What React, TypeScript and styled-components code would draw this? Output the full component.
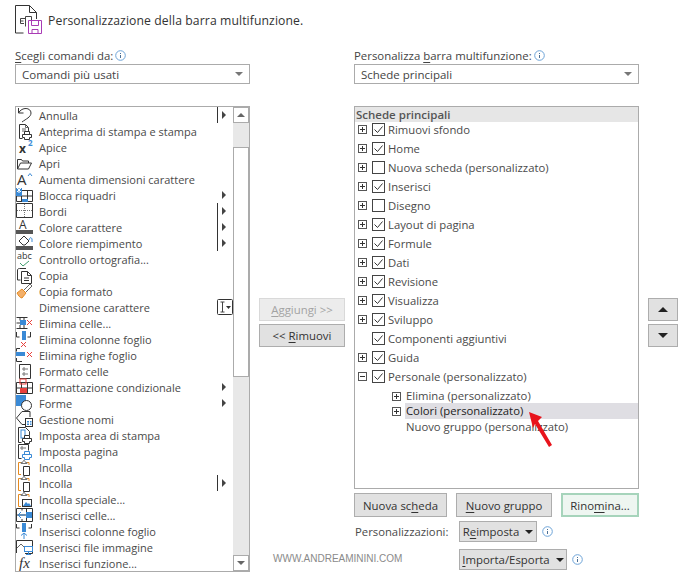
import React, { FC, ReactNode } from 'react';
import styled, { createGlobalStyle } from 'styled-components';

const GlobalStyle = createGlobalStyle`
  html, body {
    margin: 0;
    padding: 0;
    background: #fff;
  }
  body {
    font-family: 'Open Sans', 'Noto Sans', sans-serif;
    font-size: 12px;
    color: #444;
  }
`;

const BLUE = '#3a8ad6';
const RED = '#e8403c';
const ORANGE = '#e68a1f';
const INK = '#333';

const Lines: FC<{ d: string; color?: string; fill?: string }> = ({ d, color = INK, fill = 'none' }) => (
  <path d={d} stroke={color} fill={fill} strokeWidth={1} />
);

const Label: FC<{
  x: number;
  y: number;
  size: number;
  weight?: number;
  color?: string;
  fx?: boolean;
  children: ReactNode;
}> = ({ x, y, size, weight = 400, color = INK, fx, children }) => (
  <text
    x={x}
    y={y}
    fontSize={size}
    fontWeight={weight}
    fill={color}
    fontStyle={fx ? 'italic' : 'normal'}
    fontFamily={fx ? 'Liberation Serif, serif' : 'Open Sans, sans-serif'}
  >
    {children}
  </text>
);

const grid = 'M.5 3.5h16v11H.5zM.5 9h16M5.5 3.5v11M11.5 3.5v11';
const pasteBase = (
  <>
    <Lines d="M5 3.5H2.5v12H5" color={ORANGE} />
    <Lines d="M11 3.5h2V6" color={ORANGE} />
    <Lines d="M5 3.5h1.5l1-2h1l1 2H11v1H5z" color="#777" />
  </>
);
const printer = (color: string) => <Lines d="M8.5 11.5v-3h5v3M6.5 11.5h9v3h-2v2h-5v-2h-2z" color={color} fill="#fff" />;

const icons: Record<string, ReactNode> = {
  undo: <Lines d="M2.5 1v5h5M2.5 6C6-.5 15 .5 15 6c0 4-5 6-9 9" />,
  preview: (
    <>
      <Lines d="M3.5 1.5h6l3 3v6M3.5 1.5v14h3" />
      <Lines d="M9.5 1.5v3h3M6 6h4M6 8h4" color="#666" />
      {printer(INK)}
    </>
  ),
  sup: (
    <>
      <Label x={3} y={14} size={12} weight={700}>x</Label>
      <Label x={12} y={7} size={8} weight={700} color={BLUE}>2</Label>
    </>
  ),
  open: <Lines d="M1.5 14V4.5h4l1 1.5h6v2M1.5 14l3-6h11l-3 6z" />,
  grow: (
    <>
      <Label x={1} y={14} size={15}>A</Label>
      <Lines d="M12 5l2-2.5L16 5" color={BLUE} />
    </>
  ),
  freeze: (
    <>
      <Lines d={grid} />
      <rect x={0} y={1} width={6} height={8} fill={BLUE} />
      <rect x={6} y={12} width={6} height={3} fill={BLUE} />
      <Lines d="M1 5L5 1M1 1l4 4M3 0v6" color="#fff" />
    </>
  ),
  borders: (
    <>
      <Lines d="M.5 .5h16v14H.5z" />
      <path d="M8.5 1v13M1 7.5h15" stroke="#777" strokeDasharray="1 1" />
    </>
  ),
  fontcolor: (
    <>
      <Label x={3} y={10} size={12}>A</Label>
      <rect x={0} y={11} width={17} height={4} fill="#555" />
    </>
  ),
  fill: (
    <>
      <Lines d="M3 6l5-5 5 5-4 4H7z" />
      <Lines d="M13 5c1-3 2-3 3-1v3" color={BLUE} />
      <rect x={0} y={11} width={17} height={4} fill="#555" />
    </>
  ),
  spell: (
    <>
      <Label x={1} y={8} size={9}>abc</Label>
      <Lines d="M4 12l3 3 6-5" color="#3f9e6e" />
    </>
  ),
  copy: (
    <>
      <Lines d="M6 1.5h4M1.5 3v10h3M1.5 3c0-1 1-1.5 2-1.5h3" />
      <Lines d="M5.5 4.5h6l4 4v8h-10zM11.5 4.5v4h4M8 11h5M8 13.5h5" />
    </>
  ),
  brush: (
    <>
      <path d="M1 10l5-4 4 4-4 5c-2 0-4-3-5-5z" fill="#f3b06a" stroke={ORANGE} />
      <Lines d="M8 7l6-6 2 2-6 6" color="#666" />
    </>
  ),
  delcell: (
    <>
      <Lines d="M.5 2.5h11M.5 13.5h11M4 2.5v3M8 2.5v3M4 10v3.5M8 10v3.5M.5 8h4" />
      <rect x={4} y={5} width={6} height={5} fill={BLUE} />
      <Lines d="M11 5l5 5M16 5l-5 5" color={RED} />
    </>
  ),
  delcol: (
    <>
      <Lines d="M.5 1v5h3M14.5 1v5h-3" />
      <rect x={6} y={0} width={4} height={9} fill={BLUE} />
      <Lines d="M5 11l5 5M10 11l-5 5" color={RED} />
    </>
  ),
  delrow: (
    <>
      <Lines d="M4 1.5H.5v3M.5 11v3.5H6" />
      <rect x={0} y={5} width={9} height={4} fill={BLUE} />
      <Lines d="M11 5l5 5M16 5l-5 5" color={RED} />
    </>
  ),
  format: (
    <>
      <Lines d="M3.5 1.5h11v14h-11z" />
      <path d="M7 5h2v2H7zM7 10h2v2H7zM10 6h2M10 11h2" stroke="#777" fill="none" />
    </>
  ),
  cond: (
    <>
      <Lines d={grid} />
      <rect x={4} y={0} width={6} height={5} fill="none" stroke={RED} />
      <rect x={4} y={9} width={7} height={5} fill={RED} />
    </>
  ),
  shapes: (
    <>
      <path d="M0 0h10v7H6v4H0z" fill={BLUE} />
      <circle cx={10.5} cy={10.5} r={5} fill="#fff" stroke={INK} />
    </>
  ),
  names: (
    <>
      <Lines d="M14 6V.5H6L.5 7 6 13.5h3" />
      <rect x={9.5} y={7.5} width={7} height={8} fill="#fff" stroke={INK} />
      <path d="M11 10h2v1.5h-2zM14 10h1.5v1.5H14zM11 12.5h2V14h-2zM14 12.5h1.5V14H14z" fill={BLUE} />
    </>
  ),
  area: (
    <>
      <Lines d="M2.5.5h7l4 4v4M2.5.5v15h3" />
      <rect x={5} y={3} width={4} height={8} fill="none" stroke={BLUE} />
      {printer(INK)}
    </>
  ),
  setup: (
    <>
      <Lines d="M2.5 1.5v14h3M2.5 1.5h10v6" />
      <path d="M5 4h2v2H5zM8 5h2" stroke="#777" fill="none" />
      {printer(BLUE)}
    </>
  ),
  paste: (
    <>
      {pasteBase}
      <Lines d="M7.5 7.5h6v9h-6z" fill="#fff" />
    </>
  ),
  pastesp: (
    <>
      {pasteBase}
      <rect x={6.5} y={8.5} width={9} height={7} fill="#fff" stroke={INK} />
      <path d="M7 15l3-4 2 2 1-1 2 3z" fill={BLUE} />
    </>
  ),
  inscell: (
    <>
      <Lines d="M.5 1.5h16v13H.5zM.5 8h16M10.5 1.5v13M6 1.5v2M6 12v2.5" />
      <rect x={10} y={5} width={6} height={6} fill={BLUE} />
      <Lines d="M9 8H2M5 5L2 8l3 3" color={BLUE} />
    </>
  ),
  inscol: (
    <>
      <Lines d="M.5 1v4h3M15.5 1v4h-3" />
      <rect x={6} y={0} width={4} height={9} fill={BLUE} />
      <Lines d="M8 16v-6M5 12.5L8 10l3 2.5" color={BLUE} />
    </>
  ),
  insimg: (
    <>
      <Lines d="M.5 1.5h16v13H9M.5 1.5V14" />
      <Lines d="M1 9l4-4 3 3" color="#666" />
      <rect x={8.5} y={7.5} width={8} height={5} fill="#fff" stroke={BLUE} />
      <Lines d="M12.5 12.5v3M10 15.5h5" color={BLUE} />
    </>
  ),
  fx: <Label x={3} y={13} size={15} fx>fx</Label>,
};

const commands: { label: string; icon?: string; more?: boolean; bar?: boolean; combo?: boolean }[] = [
  { label: 'Annulla', icon: 'undo', more: true, bar: true },
  { label: 'Anteprima di stampa e stampa', icon: 'preview' },
  { label: 'Apice', icon: 'sup' },
  { label: 'Apri', icon: 'open' },
  { label: 'Aumenta dimensioni carattere', icon: 'grow' },
  { label: 'Blocca riquadri', icon: 'freeze', more: true },
  { label: 'Bordi', icon: 'borders', more: true, bar: true },
  { label: 'Colore carattere', icon: 'fontcolor', more: true, bar: true },
  { label: 'Colore riempimento', icon: 'fill', more: true, bar: true },
  { label: 'Controllo ortografia...', icon: 'spell' },
  { label: 'Copia', icon: 'copy' },
  { label: 'Copia formato', icon: 'brush' },
  { label: 'Dimensione carattere', combo: true },
  { label: 'Elimina celle...', icon: 'delcell' },
  { label: 'Elimina colonne foglio', icon: 'delcol' },
  { label: 'Elimina righe foglio', icon: 'delrow' },
  { label: 'Formato celle', icon: 'format' },
  { label: 'Formattazione condizionale', icon: 'cond', more: true },
  { label: 'Forme', icon: 'shapes', more: true },
  { label: 'Gestione nomi', icon: 'names' },
  { label: 'Imposta area di stampa', icon: 'area' },
  { label: 'Imposta pagina', icon: 'setup' },
  { label: 'Incolla', icon: 'paste' },
  { label: 'Incolla', icon: 'paste', more: true, bar: true },
  { label: 'Incolla speciale...', icon: 'pastesp' },
  { label: 'Inserisci celle...', icon: 'inscell' },
  { label: 'Inserisci colonne foglio', icon: 'inscol' },
  { label: 'Inserisci file immagine', icon: 'insimg' },
  { label: 'Inserisci funzione...', icon: 'fx' },
];

const tabs: { label: string; checked: boolean; noToggle?: boolean; open?: boolean }[] = [
  { label: 'Rimuovi sfondo', checked: true },
  { label: 'Home', checked: true },
  { label: 'Nuova scheda (personalizzato)', checked: false },
  { label: 'Inserisci', checked: true },
  { label: 'Disegno', checked: false },
  { label: 'Layout di pagina', checked: true },
  { label: 'Formule', checked: true },
  { label: 'Dati', checked: true },
  { label: 'Revisione', checked: true },
  { label: 'Visualizza', checked: true },
  { label: 'Sviluppo', checked: true },
  { label: 'Componenti aggiuntivi', checked: true, noToggle: true },
  { label: 'Guida', checked: true },
  { label: 'Personale (personalizzato)', checked: true, open: true },
];

const Info: FC = () => (
  <InfoMark width="11" height="11" viewBox="0 0 11 11">
    <circle cx="5.5" cy="5.5" r="4.8" fill="none" stroke="#6ea4d8" />
    <path d="M5.5 3v1M5.5 5v3" stroke="#4a6f95" />
  </InfoMark>
);

const Toggle: FC<{ open?: boolean }> = ({ open }) => (
  <ToggleMark width="9" height="9" viewBox="0 0 9 9">
    <rect x=".5" y=".5" width="8" height="8" fill="#fff" stroke="#555" />
    <path d={open ? 'M2 4.5h5' : 'M2 4.5h5M4.5 2v5'} stroke="#333" />
  </ToggleMark>
);

const Check: FC<{ checked: boolean }> = ({ checked }) => (
  <CheckMark width="13" height="13" viewBox="0 0 13 13">
    <rect x=".5" y=".5" width="12" height="12" fill="#fff" stroke="#444" />
    {checked && <path d="M2.5 6.5l3 3 5-6" fill="none" stroke="#333" />}
  </CheckMark>
);

const HeaderIcon: FC = () => (
  <svg width="28" height="30" viewBox="0 0 28 30">
    <path d="M.5 28V.5h14l7 7V14M14.5.5v7h7M.5 28h8" fill="#fff" stroke="#333" />
    <path d="M9 18.5H5.5v-5h5M10.5 11.5h6V16M5.5 16h3M10.5 11.5v10" fill="none" stroke="#444" />
    <path d="M13.5 15.5h13v13h-13z" fill="#fff" stroke="#a93bb5" />
    <path d="M16.5 15.5v5h7v-5M17 28.5v-4h6v4" fill="none" stroke="#a93bb5" />
  </svg>
);

const App: FC = () => {
  return (
    <Page>
      <GlobalStyle />
      <Header>
        <HeaderIcon />
        <Title>Personalizzazione della barra multifunzione.</Title>
      </Header>
      <Columns>
        <LeftColumn>
          <FieldLabel>
            <Key>S</Key>cegli comandi da:
            <Info />
          </FieldLabel>
          <Select>
            Comandi più usati
            <SelectCaret />
          </Select>
          <CommandList>
            <CommandRows>
              {commands.map((c, i) => (
                <CommandRow key={i}>
                  <CommandIcon>
                    {c.icon && (
                      <svg width="17" height="16" viewBox="0 0 17 16" overflow="visible">
                        {icons[c.icon]}
                      </svg>
                    )}
                  </CommandIcon>
                  <CommandLabel>{c.label}</CommandLabel>
                  {c.more && (
                    <SubMenu $bar={c.bar}>
                      <SubArrow />
                    </SubMenu>
                  )}
                  {c.combo && (
                    <ComboBadge>
                      <svg width="16" height="16" viewBox="0 0 16 16">
                        <rect x=".5" y=".5" width="15" height="15" rx="1" fill="#fff" stroke="#333" />
                        <path d="M3.5 3h4M3.5 13h4M5.5 3v10" fill="none" stroke="#444" />
                        <path d="M9 7h5l-2.5 3z" fill="#333" />
                      </svg>
                    </ComboBadge>
                  )}
                </CommandRow>
              ))}
            </CommandRows>
            <ScrollBar>
              <ScrollButton>
                <UpCaret $color="#666" $size={4} />
              </ScrollButton>
              <ScrollTrack>
                <ScrollThumb />
              </ScrollTrack>
              <ScrollButton>
                <DownCaret $color="#666" $size={4} />
              </ScrollButton>
            </ScrollBar>
          </CommandList>
        </LeftColumn>

        <MoveColumn>
          <Button $disabled $w={86} $h={23}>
            <Key>A</Key>ggiungi &gt;&gt;
          </Button>
          <Button $w={86} $h={23}>
            &lt;&lt; <Key>R</Key>imuovi
          </Button>
        </MoveColumn>

        <RightColumn>
          <FieldLabel>
            Personalizza <Key>b</Key>arra multifunzione:
            <Info />
          </FieldLabel>
          <Select>
            Schede principali
            <SelectCaret />
          </Select>
          <TreeBox>
            <TreeHeader>Schede principali</TreeHeader>
            {tabs.map((t) => (
              <TabRow key={t.label}>
                <ToggleSlot>{!t.noToggle && <Toggle open={t.open} />}</ToggleSlot>
                <Check checked={t.checked} />
                <TabLabel>{t.label}</TabLabel>
              </TabRow>
            ))}
            <GroupList>
              <GroupRow $first>
                <Toggle />
                <GroupLabel>Elimina (personalizzato)</GroupLabel>
              </GroupRow>
              <GroupRow>
                <Toggle />
                <GroupLabel $selected>Colori (personalizzato)</GroupLabel>
              </GroupRow>
              <GroupRow>
                <GroupLabel $bare>Nuovo gruppo (personalizzato)</GroupLabel>
              </GroupRow>
            </GroupList>
          </TreeBox>
          <ButtonRow>
            <Button $w={93} $h={24}>
              Nuova sc<Key>h</Key>eda
            </Button>
            <Button $w={96} $h={24}>
              <Key>N</Key>uovo gruppo
            </Button>
            <Button $w={78} $h={24} $focused>
              Rino<Key>m</Key>ina...
            </Button>
          </ButtonRow>
          <CustomRow>
            <CustomLabel>Personalizzazioni:</CustomLabel>
            <Button $w={78} $h={21}>
              R<Key>e</Key>imposta
              <ButtonCaret />
            </Button>
            <Info />
          </CustomRow>
          <CustomRow $tight>
            <CustomLabel />
            <Button $w={108} $h={21}>
              <Key>I</Key>mporta/Esporta
              <ButtonCaret />
            </Button>
            <Info />
          </CustomRow>
        </RightColumn>

        <OrderColumn>
          <Button $w={30} $h={23}>
            <UpCaret $color="#222" $size={5} />
          </Button>
          <Button $w={30} $h={23}>
            <DownCaret $color="#222" $size={5} />
          </Button>
        </OrderColumn>
      </Columns>

      <Watermark>WWW.ANDREAMININI.COM</Watermark>
      <Pointer width="30" height="42" viewBox="0 0 30 42">
        <path d="M4 4l13 5-4 4 14 24-3 2L10 16l-2 4z" fill="#e8141c" />
      </Pointer>
    </Page>
  );
};

export default App;

const Page = styled.div`
  position: relative;
  width: 680px;
  height: 579px;
  overflow: hidden;
  padding: 5px 0 0 15px;
  box-sizing: border-box;
`;

const Header = styled.div`
  display: flex;
  align-items: center;
  gap: 5px;
  height: 30px;
`;

const Title = styled.div`
  font-size: 12.2px;
  color: #333;
  letter-spacing: 0.1px;
`;

const Columns = styled.div`
  display: flex;
  margin-top: 12px;
`;

const LeftColumn = styled.div`
  width: 235px;
  display: flex;
  flex-direction: column;
`;

const RightColumn = styled.div`
  width: 285px;
  display: flex;
  flex-direction: column;
`;

const MoveColumn = styled.div`
  width: 86px;
  margin: 0 9px;
  padding-top: 251px;
  display: flex;
  flex-direction: column;
  gap: 3px;
`;

const OrderColumn = styled.div`
  width: 30px;
  margin-left: 9px;
  padding-top: 251px;
  display: flex;
  flex-direction: column;
  gap: 3px;
`;

const FieldLabel = styled.div`
  height: 17px;
  line-height: 14px;
  display: flex;
  align-items: center;
  white-space: pre;
  font-size: 11.4px;
  color: #444;
`;

const Key = styled.u`
  text-underline-offset: 2px;
`;

const InfoMark = styled.svg`
  margin-left: 2px;
  flex: none;
`;

const Select = styled.div`
  height: 20px;
  box-sizing: border-box;
  border: 1px solid #ababab;
  padding: 0 6px;
  display: flex;
  align-items: center;
  justify-content: space-between;
  font-size: 11.5px;
  color: #444;
`;

const SelectCaret = styled.span`
  border-left: 4px solid transparent;
  border-right: 4px solid transparent;
  border-top: 4px solid #777;
`;

const CommandList = styled.div`
  margin-top: 22px;
  height: 466px;
  box-sizing: border-box;
  border: 1px solid #ababab;
  display: flex;
`;

const CommandRows = styled.div`
  flex: 1;
  min-width: 0;
`;

const CommandRow = styled.div`
  height: 16px;
  display: flex;
  align-items: center;
`;

const CommandIcon = styled.div`
  width: 23px;
  flex: none;
  height: 16px;
`;

const CommandLabel = styled.div`
  flex: 1;
  font-size: 11px;
  color: #4a4a4a;
  white-space: nowrap;
`;

const SubMenu = styled.div<{ $bar?: boolean }>`
  width: 16px;
  height: 16px;
  flex: none;
  box-sizing: border-box;
  padding-left: 4px;
  display: flex;
  align-items: center;
  border-left: 1px solid ${(p) => (p.$bar ? '#333' : 'transparent')};
`;

const SubArrow = styled.span`
  border-top: 4px solid transparent;
  border-bottom: 4px solid transparent;
  border-left: 4px solid #444;
`;

const ComboBadge = styled.div`
  width: 16px;
  height: 16px;
  flex: none;
`;

const ScrollBar = styled.div`
  width: 16px;
  flex: none;
  display: flex;
  flex-direction: column;
  background: #e8e8e8;
`;

const ScrollButton = styled.div`
  height: 16px;
  flex: none;
  box-sizing: border-box;
  border: 1px solid #ababab;
  background: #fff;
  display: flex;
  align-items: center;
  justify-content: center;
`;

const ScrollTrack = styled.div`
  flex: 1;
  padding-top: 24px;
`;

const ScrollThumb = styled.div`
  height: 230px;
  box-sizing: border-box;
  border: 1px solid #ababab;
  background: #fff;
`;

const UpCaret = styled.span<{ $color: string; $size: number }>`
  border-left: ${(p) => p.$size}px solid transparent;
  border-right: ${(p) => p.$size}px solid transparent;
  border-bottom: ${(p) => p.$size}px solid ${(p) => p.$color};
`;

const DownCaret = styled.span<{ $color: string; $size: number }>`
  border-left: ${(p) => p.$size}px solid transparent;
  border-right: ${(p) => p.$size}px solid transparent;
  border-top: ${(p) => p.$size}px solid ${(p) => p.$color};
`;

const Button = styled.div<{ $w: number; $h: number; $disabled?: boolean; $focused?: boolean }>`
  width: ${(p) => p.$w}px;
  height: ${(p) => p.$h}px;
  flex: none;
  box-sizing: border-box;
  display: flex;
  align-items: center;
  justify-content: center;
  white-space: pre;
  font-size: 11.4px;
  color: ${(p) => (p.$disabled ? '#a3a3a3' : '#333')};
  background: ${(p) => (p.$disabled ? '#ececec' : p.$focused ? '#eef6f1' : '#e1e1e1')};
  border: ${(p) => (p.$focused ? '2px solid #a6d4bb' : `1px solid ${p.$disabled ? '#d9d9d9' : '#adadad'}`)};
`;

const ButtonCaret = styled.span`
  margin-left: 6px;
  border-left: 4px solid transparent;
  border-right: 4px solid transparent;
  border-top: 4px solid #222;
`;

const TreeBox = styled.div`
  margin-top: 22px;
  height: 383px;
  box-sizing: border-box;
  border: 1px solid #ababab;
  padding: 0 0 0 1px;
`;

const TreeHeader = styled.div`
  height: 15px;
  margin: 0 0 -2px -1px;
  padding-left: 1px;
  line-height: 15px;
  background: #e6e6e6;
  font-size: 11.5px;
  font-weight: 600;
  color: #555;
`;

const TabRow = styled.div`
  height: 19px;
  display: flex;
  align-items: center;
  position: relative;
`;

const ToggleSlot = styled.div`
  width: 9px;
  margin-left: 2px;
  height: 9px;
  flex: none;
  display: flex;
`;

const ToggleMark = styled.svg`
  flex: none;
  display: block;
`;

const CheckMark = styled.svg`
  flex: none;
  margin-left: 5px;
`;

const TabLabel = styled.div`
  margin-left: 3px;
  font-size: 11.3px;
  color: #4a4a4a;
  white-space: nowrap;
`;

const GroupList = styled.div`
  margin-top: 2px;
`;

const GroupRow = styled.div<{ $first?: boolean }>`
  height: 16px;
  display: flex;
  align-items: center;
  padding-left: 36px;
  margin: ${(p) => (p.$first ? '1px 0 -1px' : '0')};
`;

const GroupLabel = styled.div<{ $selected?: boolean; $bare?: boolean }>`
  flex: 1;
  height: 16px;
  line-height: 16px;
  margin-left: ${(p) => (p.$bare ? '13px' : '4px')};
  padding-left: 1px;
  font-size: 11.3px;
  white-space: nowrap;
  color: ${(p) => (p.$selected ? '#222' : '#4a4a4a')};
  background: ${(p) => (p.$selected ? '#dfdee3' : 'transparent')};
`;

const ButtonRow = styled.div`
  margin-top: 4px;
  display: flex;
  gap: 9px;
`;

const CustomRow = styled.div<{ $tight?: boolean }>`
  margin-top: ${(p) => (p.$tight ? '7px' : '4px')};
  display: flex;
  align-items: center;
  gap: 3px;
`;

const CustomLabel = styled.div`
  width: 102px;
  padding-left: 1px;
  box-sizing: border-box;
  font-size: 11.3px;
  color: #4a4a4a;
`;

const Watermark = styled.div`
  position: absolute;
  left: 273px;
  top: 553px;
  font-family: 'Liberation Sans', sans-serif;
  font-size: 10px;
  color: #8a8a8a;
`;

const Pointer = styled.svg`
  position: absolute;
  left: 525px;
  top: 408px;
`;
